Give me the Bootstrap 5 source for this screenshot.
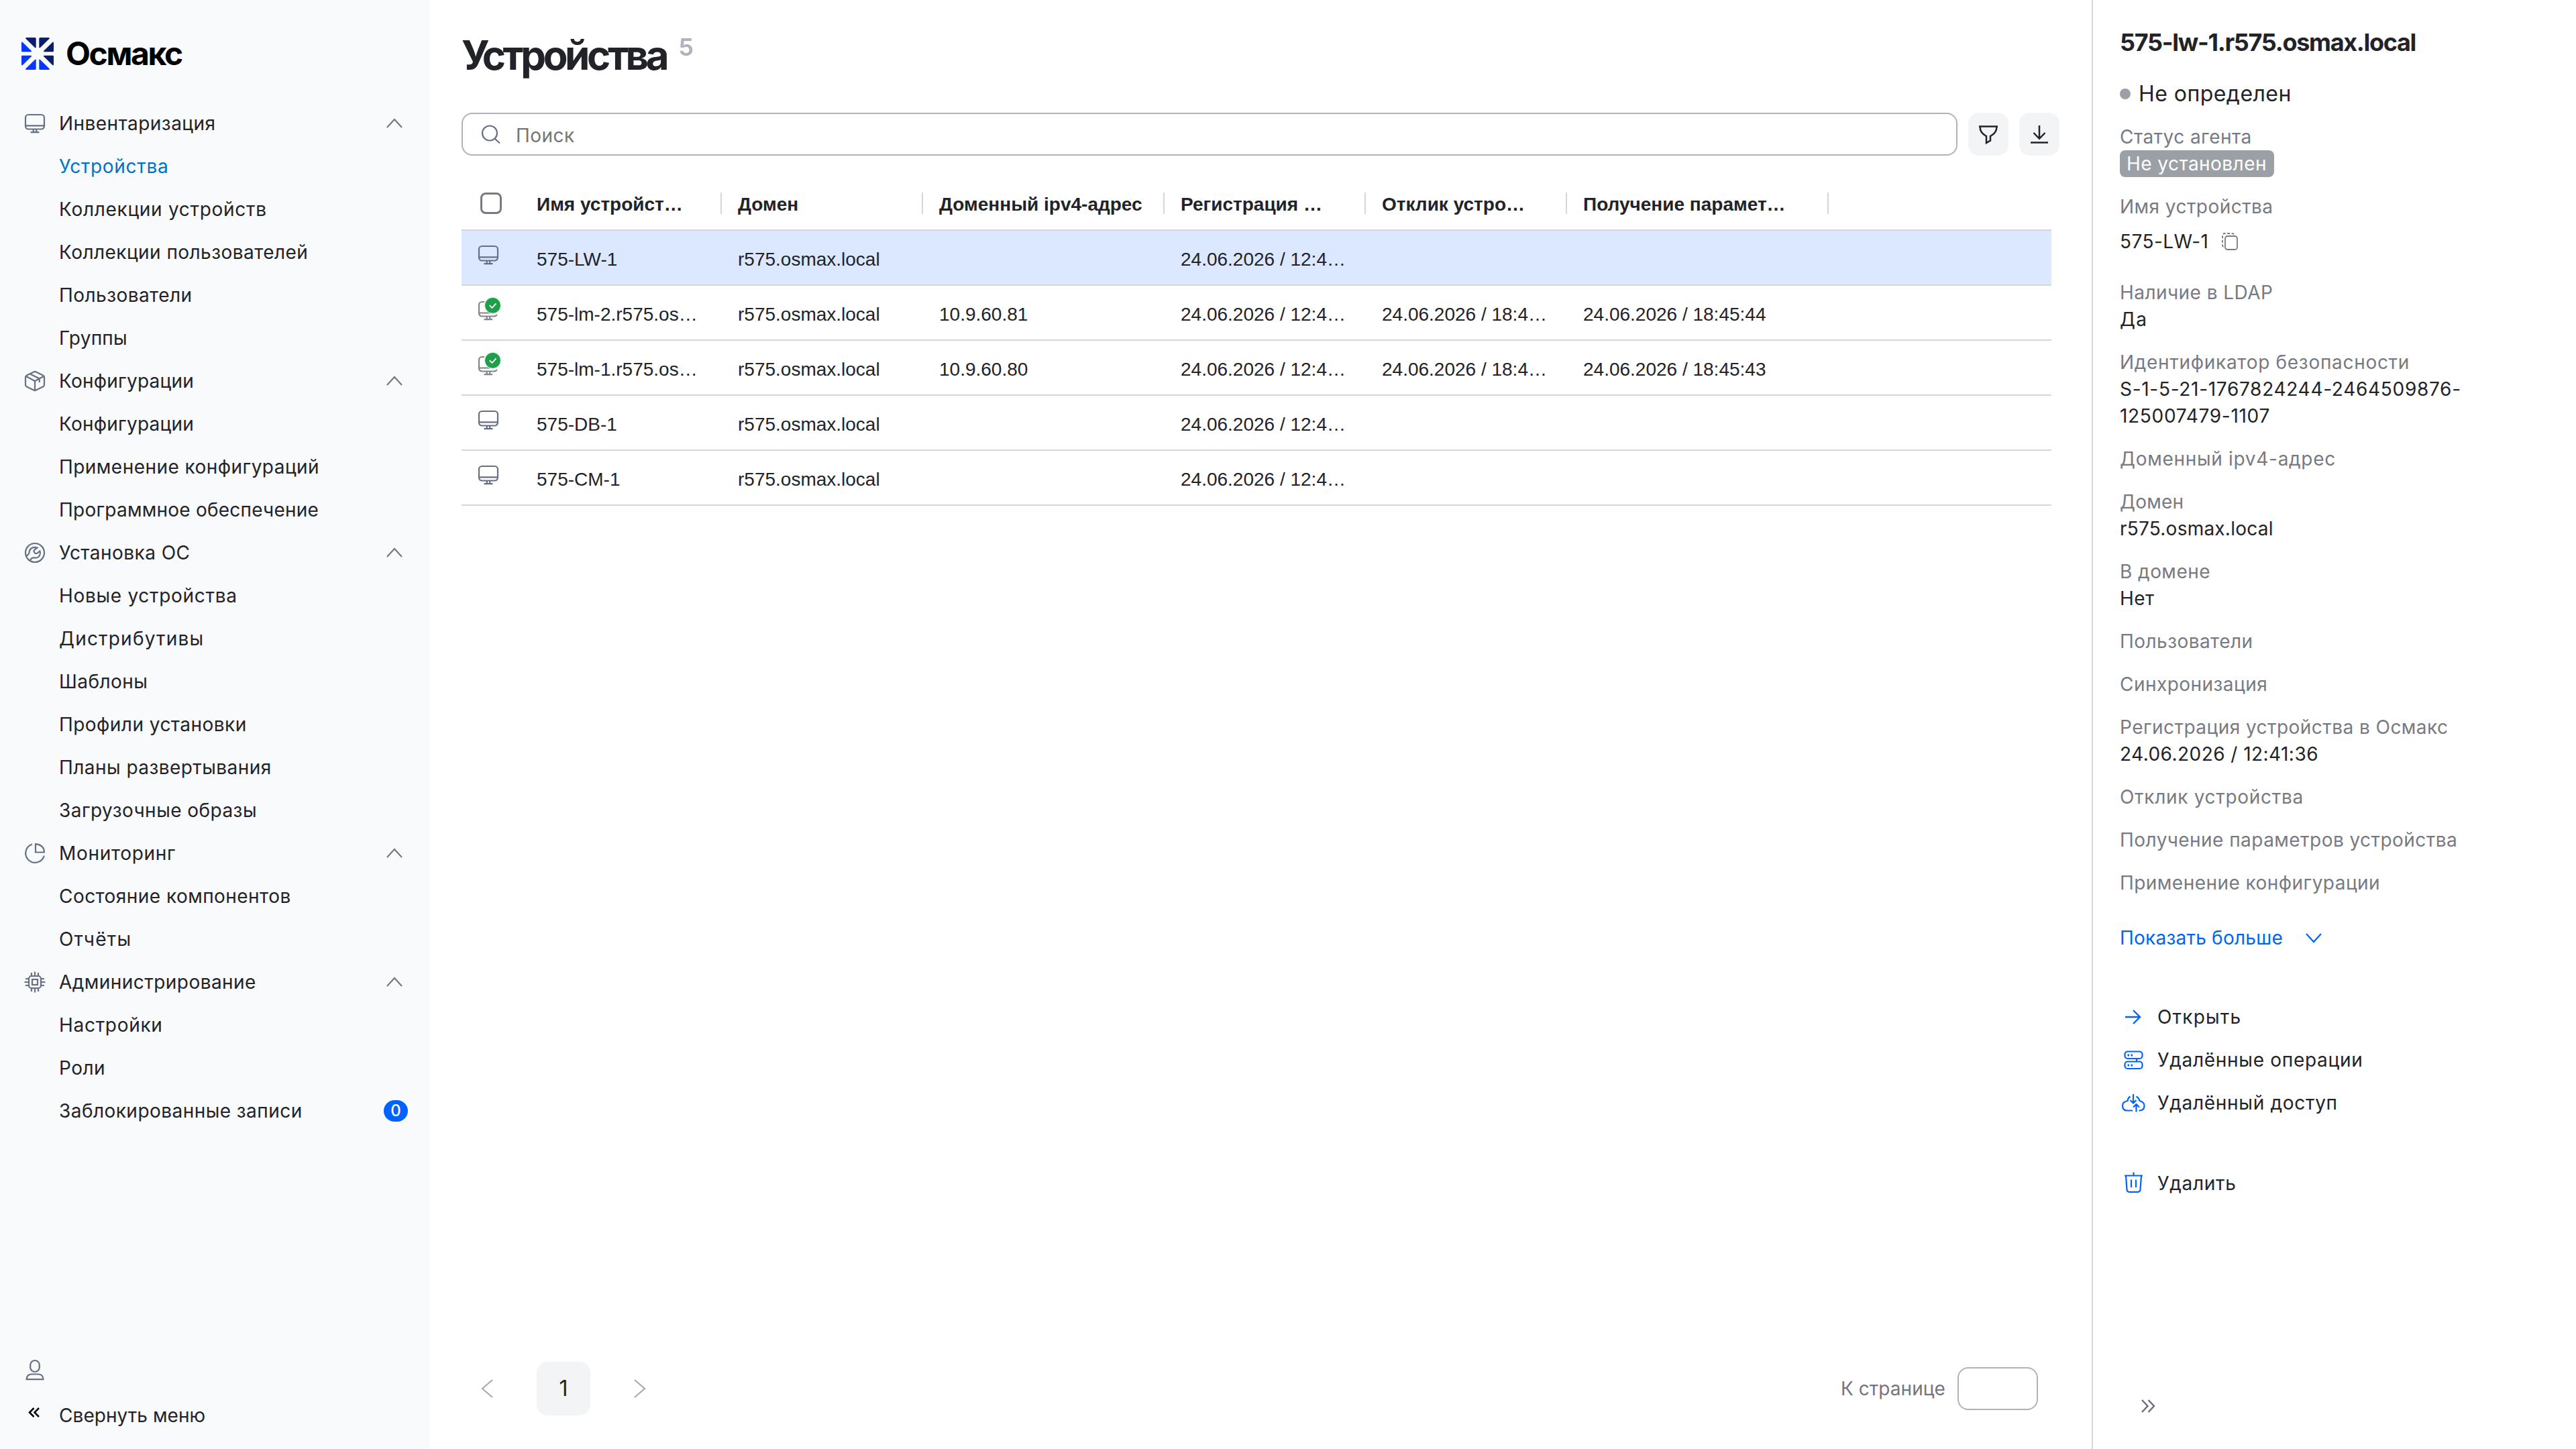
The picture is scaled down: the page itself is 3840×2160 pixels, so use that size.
<!DOCTYPE html>
<html lang="ru">
<head>
<meta charset="utf-8">
<title>Осмакс — Устройства</title>
<link href="https://cdn.jsdelivr.net/npm/bootstrap@5.3.0/dist/css/bootstrap.min.css" rel="stylesheet">
<style>
:root{--ink:#222329;--muted:#787a83;--slate:#667085;--accent:#0062ff;--line:#d5d6d9;--field:#b0b3bb}
body{width:3840px;height:2160px;overflow:hidden;font:400 28px/40px Inter,"Liberation Sans",sans-serif;letter-spacing:.45px;color:var(--ink);background:#fff}
svg{fill:none;stroke:currentColor;stroke-width:2.2;overflow:visible;flex:none;display:block}
/* tracking steps */
.tr-0{letter-spacing:.23px}
.tr-5{letter-spacing:.7px}
.tr-9{letter-spacing:1.2px}
/* sidebar */
.app-side{width:640px;background:#f9fafc;padding:56px 32px 18px 32px}
.brand{gap:18px;height:48px;margin-bottom:48px;font-size:48px;font-weight:700;letter-spacing:-2.4px;color:#000}
.brand svg{stroke:none}
.side-row{height:64px;padding:0}
.side-row .slot{width:40px;margin-right:16px;color:var(--slate)}
.side-row .nav-link{padding:0;color:inherit}
.side-row.current .nav-link{color:#0072c9}
.side-row .arrow{color:#787a83}
.count{width:36px;height:32px;border-radius:16px;background:var(--accent);font-size:24px;font-weight:500;padding:0;letter-spacing:0}
.side-row.folder .nav-link{letter-spacing:.06px}
/* main */
.app-main{width:2478px;padding:46px 48px 50px}
.heading{gap:18px}
.app-main h1{font-size:60px;line-height:72px;font-weight:700;letter-spacing:-4.4px;margin:0}
.total{font-size:36px;line-height:40px;font-weight:600;letter-spacing:0;color:#b1b3bc;margin-top:4px}
.tools{gap:16px;margin-top:50px}
.finder{gap:23px;height:64px;border:2px solid var(--field);border-radius:16px;padding:0 24px;color:var(--slate)}
.finder .form-control{border:0;padding:3px 0 0;font:inherit;letter-spacing:inherit;background:none;color:#757575;box-shadow:none}
.finder .form-control::placeholder{color:#757575;opacity:1}
.sq{width:60px;height:64px;border:0;border-radius:16px;background:#f3f4f6;padding:0;color:var(--ink)}
.sq svg{stroke-width:2.5}
.grid{width:2370px;margin:32px 0 0;table-layout:fixed;border-collapse:separate;border-spacing:0;font:400 28px/32px "Liberation Sans",Arial,sans-serif;letter-spacing:0;color:var(--ink)}
.grid>:not(caption)>*>*{height:82px;padding:6px 24px 0;border-bottom:2px solid var(--line);background:none;color:var(--ink);white-space:nowrap;overflow:hidden;text-overflow:ellipsis;vertical-align:middle}
.grid>thead>tr>th{height:80px;padding:0 0 0 24px;font-weight:700}
.grid>thead span{padding-top:4px}
.grid>tbody>tr>td:first-child{padding:16px 0 0 20px;vertical-align:top;color:var(--slate);overflow:visible}
.grid>tbody>tr.picked>td{background:#dce8ff}
.rule{width:2px;height:32px;background:var(--line)}
.grid .form-check-input{width:32px;height:32px;border:3px solid #787a83;border-radius:8px;margin:0 0 0 4px;display:block}
.pager{gap:32px}
.pager-cell{width:80px;height:80px;border-radius:16px;color:#a9abb3}
.pager-cell.now{background:#f3f4f6;color:var(--ink);font-size:32px;letter-spacing:0}
.jump{gap:18px;color:#74767f;padding-right:32px;letter-spacing:.06px}
.jump .form-control{width:120px;height:64px;border:2px solid var(--field);border-radius:16px}
/* details panel */
.app-info{width:722px;border-left:2px solid #d5d6de;padding:39px 40px 44px 40px}
.app-info h2{font-size:36px;line-height:48px;font-weight:700;letter-spacing:-1.3px;margin:0}
.state{gap:12px;margin:33px 0 24px;font-size:32px}
.dot{width:16px;height:16px;background:#9aa0a6}
.facts{margin:0}
.facts>div{margin-bottom:24px}
.facts dt{font-weight:400;color:var(--muted)}
.facts dd{margin:0}
.copyable{height:64px;gap:20px}
.copyable svg{color:#787a83;stroke-width:1.8}
.tag{display:block;width:230px;height:40px;border-radius:8px;background:#9aa0a6;padding:0 0 0 10px;font-size:28px;font-weight:400;line-height:40px;text-align:left}
.acts{margin-top:66px}
.act{height:64px}
.act svg{color:var(--accent)}
.act.last{margin-top:56px}
.more{color:#0065f2;margin-top:18px;gap:34px}
.fold{margin-left:22px;color:#6d707b;stroke-width:2.5}
</style>
</head>
<body>
<svg width="0" height="0" class="position-absolute">
<symbol id="pc" viewBox="-20 -20 40 40"><rect x="-14" y="-13" width="28" height="21.500" rx="4.500"/><path d="M-14 3.300H14M-2.200 8.500V13M2.200 8.500V13M-6.500 13.200H6.500"/></symbol>
<symbol id="pc-ok" viewBox="-20 -20 40 40"><path stroke="#83858d" d="M-6 -9H-9.500A4.500 4.500 0 0 0 -14 -4.500V8A4.500 4.500 0 0 0 -9.500 12.500H8Q11.500 12.500 12.800 10M-14 7.500H3M-2.200 12.500V17M2.200 12.500V17M-6.500 17.200H6" transform="translate(0,-3)"/><circle cx="6.500" cy="-6.700" r="12" fill="#1f9f4c" stroke="#e9f7ee" stroke-width="1"/><path d="M1.800 -6.800L5.500 -3L11.500 -9.700" stroke="#fff" stroke-width="1.800"/></symbol>
<symbol id="box" viewBox="-20 -20 40 40"><path d="M-1.800 -13.600Q0 -14.500 1.800 -13.600L12 -8.600Q14 -7.600 14 -5.400V5.400Q14 7.600 12 8.600L1.800 13.600Q0 14.500 -1.800 13.600L-12 8.600Q-14 7.600 -14 5.400V-5.400Q-14 -7.600 -12 -8.600ZM-13 -7L0 0L13 -7M0 0V14M-7 -10.500L6.800 -3.500V2"/></symbol>
<symbol id="wrench" viewBox="-20 -20 40 40"><circle r="14"/><path d="M-12.500 4.500Q-8.500 2.500 -8.300 -1.500C-8 -6 -3 -9.500 3.500 -7.500L-.5 -4.500Q-2.500 -2.500 -.8 -.8Q1 2.500 3.500 .5L7.500 -2.500C9 1 7 7 2 7.500C-1.500 7.800 -3 6.500 -5 8.500L-7.500 11.500"/></symbol>
<symbol id="pie" viewBox="-20 -20 40 40"><path d="M-4 -13.500A14 14 0 1 0 13.800 3.500M1 -13.200V-1.500H13.800Q13.800 -12.500 1 -13.800Z"/></symbol>
<symbol id="chip" viewBox="-20 -20 40 40"><rect x="-9" y="-9" width="18" height="18" rx="4"/><rect x="-4" y="-4" width="8" height="8"/><path d="M0 -9V-15.500M-5 -9V-14M5 -9V-14M0 9V15.500M-5 9V14M5 9V14M-9 0H-15.500M-9 -5H-14M-9 5H-14M9 0H15.500M9 -5H14M9 5H14"/></symbol>
<symbol id="up" viewBox="-20 -20 40 40"><path d="M-11 6L0 -6L11 6"/></symbol>
<symbol id="person" viewBox="-20 -20 40 40"><rect x="-6.800" y="-14" width="13.600" height="17" rx="6.800"/><path d="M-12.500 14.200C-12.500 9 -9 6.500 -5 6.500H5C9 6.500 12.500 9 12.500 14.200Z"/></symbol>
</svg>

<div class="d-flex h-100">
<aside class="app-side d-flex flex-column">
  <div class="brand d-flex align-items-center">
    <svg width="48" height="48" viewBox="0 0 48 48">
      <g fill="#0a1f6b"><path d="M6.300 1.500Q5.500 0 7.500 0H20Q21.700 0 21.700 1.500V14.500Q21.300 16 20 15Z"/><path d="M41.700 1.500Q42.500 0 40.500 0H28Q26.300 0 26.300 1.500V14.500Q26.700 16 28 15Z"/><path d="M46.500 6.800Q48 6 48 8V20Q48 21.300 46.500 21.300H33.800Q32.200 21 33.300 19.800Z"/><path d="M46.500 41.200Q48 42 48 40V28Q48 26.700 46.500 26.700H33.800Q32.200 27 33.300 28.200Z"/></g>
      <g fill="#0038ff"><path d="M1.500 6.800Q0 6 0 8V20Q0 21.300 1.500 21.300H14.200Q15.800 21 14.700 19.800Z"/><path d="M1.500 41.200Q0 42 0 40V28Q0 26.700 1.500 26.700H14.200Q15.800 27 14.700 28.200Z"/><path d="M6.300 46.500Q5.500 48 7.500 48H20Q21.700 48 21.700 46.500V33.500Q21.300 32 20 33Z"/><path d="M41.700 46.500Q42.500 48 40.500 48H28Q26.300 48 26.300 46.500V33.500Q26.700 32 28 33Z"/></g>
    </svg>
    <span>Осмакс</span>
  </div>
  <ul class="nav flex-column flex-nowrap flex-grow-1">
    <li class="side-row d-flex align-items-center"><svg class="slot" width="40" height="40"><use href="#pc"/></svg><a class="nav-link flex-grow-1">Инвентаризация</a><svg class="arrow" width="40" height="40"><use href="#up"/></svg></li>
    <li class="side-row d-flex align-items-center current"><span class="slot"></span><a class="nav-link tr-5">Устройства</a></li>
    <li class="side-row d-flex align-items-center"><span class="slot"></span><a class="nav-link tr-5">Коллекции устройств</a></li>
    <li class="side-row d-flex align-items-center"><span class="slot"></span><a class="nav-link">Коллекции пользователей</a></li>
    <li class="side-row d-flex align-items-center"><span class="slot"></span><a class="nav-link">Пользователи</a></li>
    <li class="side-row d-flex align-items-center"><span class="slot"></span><a class="nav-link tr-0">Группы</a></li>
    <li class="side-row d-flex align-items-center"><svg class="slot" width="40" height="40"><use href="#box"/></svg><a class="nav-link tr-0 flex-grow-1">Конфигурации</a><svg class="arrow" width="40" height="40"><use href="#up"/></svg></li>
    <li class="side-row d-flex align-items-center"><span class="slot"></span><a class="nav-link tr-0">Конфигурации</a></li>
    <li class="side-row d-flex align-items-center"><span class="slot"></span><a class="nav-link">Применение конфигураций</a></li>
    <li class="side-row d-flex align-items-center"><span class="slot"></span><a class="nav-link tr-0">Программное обеспечение</a></li>
    <li class="side-row d-flex align-items-center"><svg class="slot" width="40" height="40"><use href="#wrench"/></svg><a class="nav-link flex-grow-1">Установка ОС</a><svg class="arrow" width="40" height="40"><use href="#up"/></svg></li>
    <li class="side-row d-flex align-items-center"><span class="slot"></span><a class="nav-link tr-5">Новые устройства</a></li>
    <li class="side-row d-flex align-items-center"><span class="slot"></span><a class="nav-link tr-9">Дистрибутивы</a></li>
    <li class="side-row d-flex align-items-center"><span class="slot"></span><a class="nav-link">Шаблоны</a></li>
    <li class="side-row d-flex align-items-center"><span class="slot"></span><a class="nav-link">Профили установки</a></li>
    <li class="side-row d-flex align-items-center"><span class="slot"></span><a class="nav-link">Планы развертывания</a></li>
    <li class="side-row d-flex align-items-center"><span class="slot"></span><a class="nav-link">Загрузочные образы</a></li>
    <li class="side-row d-flex align-items-center"><svg class="slot" width="40" height="40"><use href="#pie"/></svg><a class="nav-link tr-5 flex-grow-1">Мониторинг</a><svg class="arrow" width="40" height="40"><use href="#up"/></svg></li>
    <li class="side-row d-flex align-items-center"><span class="slot"></span><a class="nav-link">Состояние компонентов</a></li>
    <li class="side-row d-flex align-items-center"><span class="slot"></span><a class="nav-link tr-9">Отчёты</a></li>
    <li class="side-row d-flex align-items-center"><svg class="slot" width="40" height="40"><use href="#chip"/></svg><a class="nav-link flex-grow-1">Администрирование</a><svg class="arrow" width="40" height="40"><use href="#up"/></svg></li>
    <li class="side-row d-flex align-items-center"><span class="slot"></span><a class="nav-link tr-5">Настройки</a></li>
    <li class="side-row d-flex align-items-center"><span class="slot"></span><a class="nav-link">Роли</a></li>
    <li class="side-row d-flex align-items-center"><span class="slot"></span><a class="nav-link flex-grow-1">Заблокированные записи</a><span class="badge count d-flex align-items-center justify-content-center">0</span></li>
  </ul>
  <div class="side-row d-flex align-items-center mb-1"><svg class="slot" width="40" height="40"><use href="#person"/></svg></div>
  <div class="side-row folder d-flex align-items-center"><svg class="slot text-black" width="40" height="40" viewBox="-20 -20 40 40"><path stroke-width="2.500" d="M-1.500 -11L-8 -4.500L-1.500 2M6 -11L-.5 -4.500L6 2"/></svg><a class="nav-link">Свернуть меню</a></div>
</aside>

<main class="app-main d-flex flex-column">
  <div class="heading d-flex align-items-start"><h1>Устройства</h1><span class="total">5</span></div>
  <div class="tools d-flex">
    <div class="finder d-flex align-items-center flex-grow-1">
      <svg width="32" height="32" viewBox="0 0 32 32"><circle cx="16" cy="14.500" r="11"/><path d="M23.500 22.500L31 29.500"/></svg>
      <input class="form-control" placeholder="Поиск">
    </div>
    <button class="btn sq d-flex align-items-center justify-content-center"><svg width="32" height="32" viewBox="-16 -16 32 32"><path d="M-14 -11.500H14M-12.500 -11.500C-12.500 -4 -9 -.5 -3 3V13L3 9.500V3C9 -.5 12.500 -4 12.500 -11.500"/></svg></button>
    <button class="btn sq d-flex align-items-center justify-content-center"><svg width="32" height="32" viewBox="-16 -16 32 32"><path d="M0 -13V7M-8.500 -2L0 6.800L8.500 -2M-13 12.500H13"/></svg></button>
  </div>

  <table class="table grid">
    <colgroup><col width="88"><col width="300"><col width="300"><col width="360"><col width="300"><col width="300"><col width="390"><col></colgroup>
    <thead><tr>
      <th><input type="checkbox" class="form-check-input"></th>
      <th><div class="d-flex align-items-center justify-content-between"><span>Имя устройст…</span><i class="rule"></i></div></th>
      <th><div class="d-flex align-items-center justify-content-between"><span>Домен</span><i class="rule"></i></div></th>
      <th><div class="d-flex align-items-center justify-content-between"><span>Доменный ipv4-адрес</span><i class="rule"></i></div></th>
      <th><div class="d-flex align-items-center justify-content-between"><span>Регистрация …</span><i class="rule"></i></div></th>
      <th><div class="d-flex align-items-center justify-content-between"><span>Отклик устро…</span><i class="rule"></i></div></th>
      <th><div class="d-flex align-items-center justify-content-between"><span>Получение парамет…</span><i class="rule"></i></div></th>
      <th></th>
    </tr></thead>
    <tbody>
      <tr class="picked"><td><svg width="40" height="40"><use href="#pc"/></svg></td><td>575-LW-1</td><td>r575.osmax.local</td><td></td><td>24.06.2026 / 12:4…</td><td></td><td></td><td></td></tr>
      <tr><td><svg width="40" height="40"><use href="#pc-ok"/></svg></td><td>575-lm-2.r575.os…</td><td>r575.osmax.local</td><td>10.9.60.81</td><td>24.06.2026 / 12:4…</td><td>24.06.2026 / 18:4…</td><td>24.06.2026 / 18:45:44</td><td></td></tr>
      <tr><td><svg width="40" height="40"><use href="#pc-ok"/></svg></td><td>575-lm-1.r575.os…</td><td>r575.osmax.local</td><td>10.9.60.80</td><td>24.06.2026 / 12:4…</td><td>24.06.2026 / 18:4…</td><td>24.06.2026 / 18:45:43</td><td></td></tr>
      <tr><td><svg width="40" height="40"><use href="#pc"/></svg></td><td>575-DB-1</td><td>r575.osmax.local</td><td></td><td>24.06.2026 / 12:4…</td><td></td><td></td><td></td></tr>
      <tr><td><svg width="40" height="40"><use href="#pc"/></svg></td><td>575-CM-1</td><td>r575.osmax.local</td><td></td><td>24.06.2026 / 12:4…</td><td></td><td></td><td></td></tr>
    </tbody>
  </table>

  <div class="mt-auto d-flex justify-content-between align-items-center">
    <div class="pager d-flex">
      <span class="pager-cell d-flex align-items-center justify-content-center"><svg width="32" height="32" viewBox="-16 -16 32 32"><path d="M6 -13L-9 0L6 13"/></svg></span>
      <span class="pager-cell now d-flex align-items-center justify-content-center">1</span>
      <span class="pager-cell d-flex align-items-center justify-content-center"><svg width="32" height="32" viewBox="-16 -16 32 32"><path d="M-6 -13L9 0L-6 13"/></svg></span>
    </div>
    <label class="jump d-flex align-items-center">К странице<input class="form-control"></label>
  </div>
</main>

<aside class="app-info d-flex flex-column">
  <h2>575-lw-1.r575.osmax.local</h2>
  <div class="state d-flex align-items-center"><span class="dot rounded-circle"></span>Не определен</div>
  <dl class="facts">
    <div><dt>Статус агента</dt><dd><span class="badge tag">Не установлен</span></dd></div>
    <div><dt>Имя устройства</dt><dd class="copyable d-flex align-items-center"><span>575-LW-1</span><svg width="24" height="26" viewBox="0 0 24 26"><rect x="5" y="5" width="18" height="20" rx="3.500"/><path stroke-dasharray="4 2.500" d="M2.500 21Q1 20.500 1 18V4.500Q1 1 4.500 1H15Q18 1 18.500 3"/></svg></dd></div>
    <div><dt>Наличие в LDAP</dt><dd class="tr-9">Да</dd></div>
    <div><dt class="tr-5">Идентификатор безопасности</dt><dd class="tr-5">S-1-5-21-1767824244-2464509876-<br>125007479-1107</dd></div>
    <div><dt class="tr-5">Доменный ipv4-адрес</dt></div>
    <div><dt class="tr-0">Домен</dt><dd class="tr-0">r575.osmax.local</dd></div>
    <div><dt>В домене</dt><dd>Нет</dd></div>
    <div><dt>Пользователи</dt></div>
    <div><dt>Синхронизация</dt></div>
    <div><dt>Регистрация устройства в Осмакс</dt><dd>24.06.2026 / 12:41:36</dd></div>
    <div><dt class="tr-5">Отклик устройства</dt></div>
    <div><dt>Получение параметров устройства</dt></div>
    <div><dt>Применение конфигурации</dt></div>
  </dl>
  <a class="more d-flex align-items-center text-decoration-none"><span class="tr-0">Показать больше</span><svg width="24" height="24" viewBox="-12 -12 24 24"><path d="M-11 -6L0 6L11 -6"/></svg></a>
  <div class="acts">
    <div class="act tr-9 d-flex align-items-center gap-3"><svg width="40" height="40" viewBox="-20 -20 40 40"><path stroke-width="2.400" d="M-12 0H10M0 -10L10 0L0 10"/></svg>Открыть</div>
    <div class="act tr-5 d-flex align-items-center gap-3"><svg width="40" height="40" viewBox="-20 -20 40 40"><rect x="-12.500" y="-12.500" width="26" height="10.500" rx="4"/><rect x="-12.500" y="2.500" width="26" height="10.500" rx="4"/><path d="M5 -2V2.500"/><path stroke-width="3" d="M-8.500 -7H-6M-3.500 -7H-1M-8.500 8H-6M-3.500 8H-1"/></svg>Удалённые операции</div>
    <div class="act tr-5 d-flex align-items-center gap-3"><svg width="40" height="40" viewBox="-20 -20 40 40"><path d="M-4.500 -9.500Q-8 -7.500 -8.500 -3Q-16 -1.500 -16 4Q-16 11.500 -9 11.500H-1M4.500 -9.500Q8.500 -7.500 9.500 -3Q16.500 -1 16.500 4Q16.500 11 10 11.500H8.500M0 -13V0M-4.500 -4L0 .5L4.500 -4M4.500 13.500V2.500M0 6.500L4.500 2L9 6.500"/></svg>Удалённый доступ</div>
    <div class="act last tr-5 d-flex align-items-center gap-3"><svg width="40" height="40" viewBox="-20 -20 40 40"><path d="M-13 -11.500H14M.5 -16.500V-11.500M-11 -11.500L-9.500 9.500Q-9.200 12.800 -6 12.800H7Q10.200 12.800 10.500 9.500L12 -11.500M-3 -5.500V6M4 -5.500V6"/></svg>Удалить</div>
  </div>
  <svg class="fold mt-auto" width="40" height="40" viewBox="-20 -20 40 40"><path d="M-9 -9L-.5 0L-9 9M.5 -9L9 0L.5 9"/></svg>
</aside>
</div>
<script src="https://cdn.jsdelivr.net/npm/bootstrap@5.3.0/dist/js/bootstrap.bundle.min.js"></script>
</body>
</html>
